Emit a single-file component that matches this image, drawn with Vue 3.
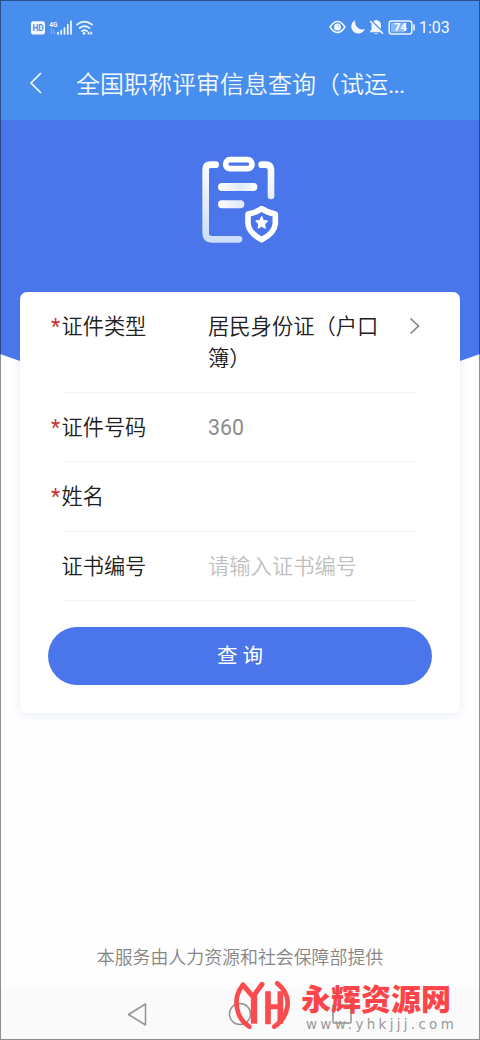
<script setup>
const fields = [
  { label: '证件类型', required: true, value: '居民身份证（户口簿）', kind: 'select' },
  { label: '证件号码', required: true, value: '360', kind: 'filled' },
  { label: '姓名', required: true, value: '', kind: 'filled' },
  { label: '证书编号', required: false, value: '请输入证书编号', kind: 'hint' },
]
</script>

<template>
  <main class="screen">
    <header class="top">
      <div class="status">
        <svg class="status-left" width="66" height="20" viewBox="0 0 66 20">
          <rect x="1" y="4.200" width="14" height="13.200" rx="2.200" fill="#f2f8ff" />
          <text x="2.400" y="14" class="hd" textLength="11.200" lengthAdjust="spacingAndGlyphs">HD</text>
          <text x="19.200" y="9.800" class="net" textLength="8.200" lengthAdjust="spacingAndGlyphs">4G</text>
          <path d="M21.500 12v5M20 13.200l1.500-1.200M24 12v5M24 17l1.300-1.200" stroke="#8fbaf6" fill="none" stroke-width=".8" />
          <path d="M28 17v-1.500M31.200 17v-3.500M34.500 17v-6M37.800 17V7.500M41 17V4.200" stroke="#f2f8ff" stroke-width="1.700" stroke-linecap="round" />
          <g fill="none" stroke="#f2f8ff" stroke-width="1.700" stroke-linecap="round">
            <path d="M47 7.700q7.500-6 15 0M49.500 11.200q5-4.200 10 0M52 14.200q2.500-2 5 0" />
          </g>
          <circle cx="54" cy="16.400" r="1.300" fill="#f2f8ff" />
          <path d="M57 16.200l2.400-1.900v3.800zM60.400 14.300l2.400 1.900-2.400 1.900z" fill="#f2f8ff" />
        </svg>
        <div class="status-right">
          <svg width="86" height="20" viewBox="0 0 86 20">
            <path d="M1 10q7.500-11 15 0q-7.500 11-15 0z" fill="none" stroke="#f2f8ff" stroke-width="1.600" stroke-linejoin="round" />
            <circle cx="8.500" cy="10" r="3.500" fill="#f2f8ff" />
            <circle cx="9.700" cy="8.800" r=".8" fill="#8ab7f6" />
            <path d="M26.200 3.200A7 7 0 1 0 35.800 12A7.500 7.500 0 0 1 26.200 3.200z" fill="#f2f8ff" />
            <path d="M41 15.200V14.200l1.500-1.800V8q0-3.800 3.700-4.700q1-1.300 2 0Q52 4.200 52 8v4.400L53.500 14.200v1zM45.200 16.200h4q-2 2-4 0z" fill="#f2f8ff" />
            <path d="M42.200 3.500L55 16" stroke="#488eef" stroke-width="1.700" />
            <path d="M41 4L54 16.800" stroke="#f2f8ff" stroke-width="1.500" />
            <rect x="60.200" y="4" width="22.600" height="13" rx="2.500" fill="none" stroke="#f2f8ff" stroke-width="1.500" />
            <rect x="62" y="5.800" width="14" height="9.400" rx="1" fill="#8ab7f6" />
            <path d="M85 7.500v6" stroke="#f2f8ff" stroke-width="1.600" />
            <text x="65" y="14.400" class="battery" textLength="13" lengthAdjust="spacingAndGlyphs">74</text>
          </svg>
          <span class="clock">1:03</span>
        </div>
      </div>
      <div class="bar">
        <svg class="back" width="14" height="22" viewBox="0 0 14 22">
          <path d="M12 1L2 11L12 21" fill="none" stroke="#f5faff" stroke-width="1.700" />
        </svg>
        <h1 class="title">全国职称评审信息查询（试运<span class="dots">...</span></h1>
      </div>
    </header>

    <section class="hero">
      <svg class="emblem" width="120" height="120" viewBox="0 0 360 360">
        <defs>
          <linearGradient id="board" x1="0" y1="60" x2="0" y2="308" gradientUnits="userSpaceOnUse">
            <stop offset="0" stop-color="#fff" />
            <stop offset="1" stop-color="#cbdcfa" />
          </linearGradient>
          <linearGradient id="line" x1="114" y1="0" x2="232" y2="0" gradientUnits="userSpaceOnUse">
            <stop offset="0" stop-color="#fff" />
            <stop offset=".6" stop-color="#dfe8fc" />
            <stop offset="1" stop-color="#fff" />
          </linearGradient>
        </defs>
        <g fill="none" stroke-linecap="round" stroke-linejoin="round">
          <path d="M107 74H92Q77 74 77 89V280Q77 298 95 298H177M245 74H257Q273 74 273 90V168" stroke="url(#board)" stroke-width="20" />
          <rect x="137" y="59" width="79" height="27" rx="13" stroke="#fff" stroke-width="17" />
          <path d="M126 141H220L220 141.100M126 193H181L181 193.100" stroke="url(#line)" stroke-width="24" />
          <path d="M245 206Q262 218 286 222V251Q284 279 245 299Q206 279 204 251V222Q228 218 245 206z" stroke="#fff" stroke-width="17" />
        </g>
        <path d="M245 229l5 12 13 2-9 9 2 13-11-6-11 6 2-13-9-9 13-2z" fill="#fff" stroke="#fff" stroke-width="3" stroke-linejoin="round" />
      </svg>
    </section>

    <section class="card">
      <div v-for="field in fields" :key="field.label" class="row" :class="field.kind">
        <div class="label"><span v-if="field.required" class="star">*</span>{{ field.label }}</div>
        <div class="value">{{ field.value }}</div>
        <svg v-if="field.kind === 'select'" class="arrow" width="12" height="18" viewBox="0 0 12 18">
          <path d="M1.500 1.500L9.500 9L1.500 16.500" fill="none" stroke="#858585" stroke-width="1.700" />
        </svg>
      </div>
      <button class="submit">查 询</button>
    </section>

    <p class="provider">本服务由人力资源和社会保障部提供</p>

    <footer class="nav">
      <svg width="478" height="51" viewBox="1 988 478 51">
        <g fill="none" stroke="#929292" stroke-width="1.500" stroke-linejoin="round">
          <path d="M128.500 1014.500L145.500 1004V1025z" />
          <circle cx="240" cy="1014" r="10.500" />
          <rect x="333" y="1005" width="18" height="18" rx="1" />
        </g>
      </svg>
    </footer>

    <aside class="watermark">
      <svg class="mark" width="58" height="52" viewBox="0 0 174 156">
        <g fill="none" stroke="#fb4548" stroke-linecap="round" stroke-linejoin="round">
          <path d="M27 18Q-4 54 14 105Q22 127 46 143" stroke-width="14" />
          <path d="M27 18L57 53L84 16" stroke-width="15" />
          <path d="M60 50V134" stroke-width="19" stroke-linecap="butt" />
          <path d="M102 37V136M139 37V134" stroke-width="17" stroke-linecap="butt" />
          <path d="M102 83H139" stroke-width="15" />
          <path d="M130 13Q167 43 160 84Q154 121 121 143" stroke-width="14" />
        </g>
      </svg>
      <div class="brand">
        <strong>永辉资源网</strong>
        <span>www.yhkjjj.com</span>
      </div>
    </aside>
  </main>
</template>

<style>
body { margin: 0; background: #fff; }
</style>

<style scoped>
.screen {
  position: relative;
  box-sizing: border-box;
  width: 480px;
  height: 1040px;
  display: flex;
  flex-direction: column;
  overflow: hidden;
  background: #fefefe;
  font-family: Roboto, "Noto Sans CJK SC", sans-serif;
  font-weight: 350;
  color: #202020;
}
.screen::after {
  content: "";
  position: absolute;
  inset: 0;
  border: 1px solid rgba(0, 0, 0, .43);
  pointer-events: none;
}
.top {
  flex: none;
  height: 120px;
  background: #488eef;
  color: #f5faff;
}
.status {
  display: flex;
  justify-content: space-between;
  align-items: center;
  height: 20px;
  padding: 17px 31px 0 30px;
}
.status-right { display: flex; align-items: center; gap: 4px; }
.clock { font-size: 16px; font-weight: 400; line-height: 20px; width: 30px; margin-top: 2px; white-space: nowrap; }
.hd { font: bold 8.500px Roboto, sans-serif; fill: #488eef; }
.net { font: bold 8px Roboto, sans-serif; fill: #f2f8ff; }
.battery { font: bold 11px Roboto, sans-serif; fill: #fff; }
.bar {
  display: flex;
  align-items: center;
  gap: 47px;
  height: 36px;
  margin-top: 30px;
  padding-left: 29px;
}
.back { flex: none; margin-top: -5px; }
.title {
  margin: 0 0 0 -14px;
  font-size: 24px;
  line-height: 36px;
  font-weight: 350;
  white-space: nowrap;
}
.dots { font-weight: 400; letter-spacing: -.8px; }
.hero {
  flex: none;
  display: flex;
  justify-content: center;
  align-items: flex-start;
  box-sizing: border-box;
  height: 300px;
  padding-top: 20px;
  background: #4b76eb;
  clip-path: polygon(0 0, 100% 0, 100% 234px, 460px 241px, 400px 265px, 80px 265px, 20px 241px, 0 234px);
}
.card {
  position: relative;
  flex: none;
  box-sizing: border-box;
  height: 421px;
  margin: -128.500px 20px 0;
  border-radius: 7px;
  background: #fff;
  box-shadow: 0 1px 10px rgba(75, 118, 235, .14);
}
.row {
  display: grid;
  grid-template-columns: 146px 182px 1fr;
  align-items: center;
  box-sizing: border-box;
  height: 69.500px;
  margin: 0 42px 0 42px;
  padding-top: 2px;
  border-bottom: 1.500px solid #f3f3f3;
  font-size: 21.300px;
  line-height: 32px;
}
.row.select {
  height: 101px;
  align-items: start;
  padding-top: 19px;
}
.label { position: relative; left: -.5px; font-size: 21.200px; }
.star { position: absolute; left: -10.500px; top: 0; color: #c83232; font-weight: 400; }
.filled .value { color: #8c8c8c; font-weight: 400; }
.hint .value { color: #bfbfbf; }
.arrow { margin: 6px 0 0 19px; }
.submit {
  display: block;
  width: 384px;
  height: 58px;
  margin: 26px 0 0 28px;
  padding: 0;
  border: 0;
  border-radius: 29px;
  background: #4b76eb;
  color: #fff;
  font: 400 20.500px/58px Roboto, "Noto Sans CJK SC", sans-serif;
}
.provider {
  margin: auto 0 17px;
  text-align: center;
  font-size: 17.920px;
  line-height: 26px;
  color: #858585;
}
.nav {
  flex: none;
  height: 52px;
  padding-left: 1px;
  background: #fafafa;
}
.watermark {
  position: absolute;
  left: 234px;
  top: 979px;
  display: flex;
}
.mark { opacity: .96; }
.brand {
  display: flex;
  flex-direction: column;
  margin: 3px 0 0 9px;
  color: #fb4548;
}
.brand strong {
  font: 900 30px/30px "Noto Sans CJK SC", sans-serif;
  white-space: nowrap;
}
.brand span {
  margin: 4px 0 0 5px;
  font: 13.500px/16px "DejaVu Sans", sans-serif;
  letter-spacing: 3.300px;
  color: #999;
}
</style>
